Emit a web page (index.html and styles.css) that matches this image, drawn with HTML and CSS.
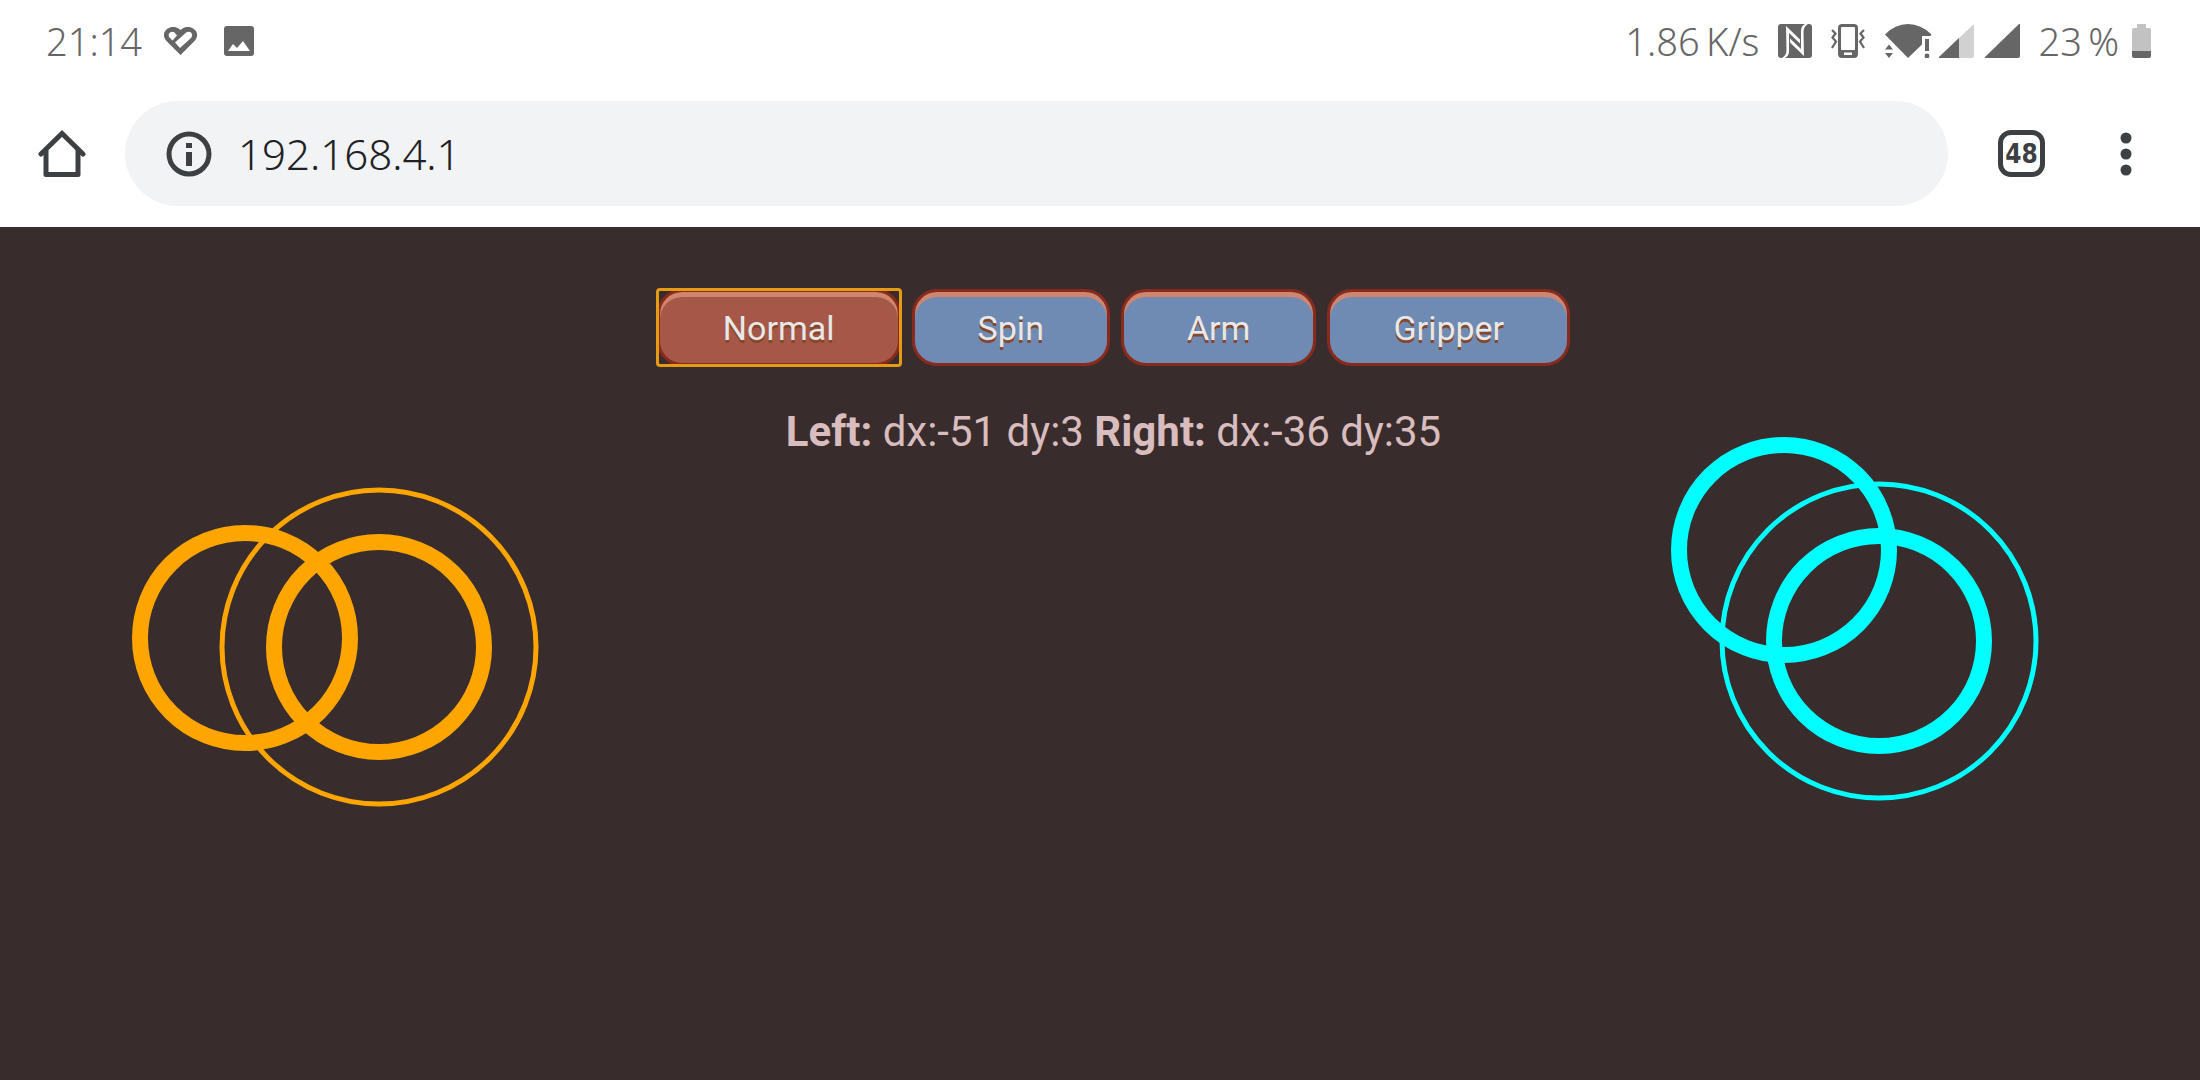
FILE: index.html
```html
<!DOCTYPE html>
<html lang="en">
<head>
<meta charset="utf-8">
<meta name="viewport" content="width=device-width, initial-scale=1">
<title>192.168.4.1</title>
<link rel="stylesheet" href="styles.css">
</head>
<body>
<header class="chrome">
  <div class="status-bar">
    <span class="clock">21:14</span>
    <svg class="icon-heart" width="34" height="28" viewBox="0 0 34 28" aria-hidden="true">
      <path fill="#666" d="M16.500 28L3 14.500C-1 10.500-1 6 2 3C5.500-.5 11-1 14.500 1.500L16.500 3L18.500 1.500C22-1 27.500-.5 31 3C34 6 34 10.500 30 14.500z"/>
      <path fill="#fff" d="M8.500 13.500L5.500 10.500C4 8.500 4.500 6.500 6 5.500C7.500 4.500 9.500 4.500 10.500 5.500L13 8.500z"/>
      <path fill="#fff" d="M11 15.500L21.500 6C23.500 4.500 25.500 4.500 27 5.500C28.500 7 28.500 9 27 11L16 21z"/>
    </svg>
    <svg class="icon-image" width="30" height="30" viewBox="0 0 30 30" aria-hidden="true">
      <path fill="#666" fill-rule="evenodd" d="M3 0h24a3 3 0 0 1 3 3v24a3 3 0 0 1-3 3H3a3 3 0 0 1-3-3V3a3 3 0 0 1 3-3z M4 25h22L19 15l-6 7-4-4z"/>
    </svg>
    <span class="net-speed">1.86&#8201;K/s</span>
    <svg class="icon-nfc" width="34" height="34" viewBox="0 0 34 34" aria-hidden="true">
      <rect width="34" height="34" rx="3" fill="#666"/>
      <path fill="#fff" d="M8 2L22 15.500V19.500L11 9V27Q11 32 7 34H4Q8.500 31.500 8.500 26z"/>
      <path fill="#fff" d="M26 32L12 18.500V14.500L23 25V7Q23 2 27 0H30Q25.500 2.500 25.500 8z"/>
    </svg>
    <svg class="icon-vibrate" width="34" height="34" viewBox="0 0 34 34" aria-hidden="true">
      <rect x="8.500" y="1.500" width="17" height="31" rx="2.500" fill="none" stroke="#666" stroke-width="3"/>
      <path fill="#666" fill-rule="evenodd" d="M8 26h18v7H8z M13 28.500h8v2.500h-8z"/>
      <path fill="none" stroke="#666" stroke-width="2.200" d="M1 6l3.500 3.500L1.500 13.500l3.500 4L1 24M33 6l-3.500 3.500 3 4-3.500 4L33 24"/>
    </svg>
    <svg class="icon-wifi" width="47" height="34" viewBox="0 0 47 34" aria-hidden="true">
      <path fill="#666" d="M0 10.500 Q10 0 23 0 Q36 0 46.500 10.500 L45.500 12 H37 V20.500 L23 34z"/>
      <path fill="#fff" d="M0 19h8l3 8v7H0z"/>
      <path fill="#666" d="M0 25.500l4-5 4 5z M0 29h8l-4 5z M40 15h4v12h-4z"/>
      <circle cx="42" cy="32" r="2.400" fill="#666"/>
    </svg>
    <svg class="icon-signal" width="35" height="34" viewBox="0 0 35 34" aria-hidden="true">
      <path fill="#d1d1d1" d="M35 0v32a2 2 0 0 1-2 2H1q-2 0-1-1z"/>
      <path fill="#666" d="M20 14v20H1q-2 0-1-1z"/>
    </svg>
    <svg class="icon-signal-full" width="35" height="34" viewBox="0 0 35 34" aria-hidden="true">
      <path fill="#666" d="M34 0h1v32a2 2 0 0 1-2 2H1q-2 0-1-1z"/>
    </svg>
    <span class="charge">23&#8201;%</span>
    <svg class="icon-battery" width="19" height="34" viewBox="0 0 19 34" aria-hidden="true">
      <path fill="#c2c2c2" d="M5 0h9v4h3a2 2 0 0 1 2 2v21H0V6a2 2 0 0 1 2-2h3z"/>
      <path fill="#666" d="M0 27h19v5a2 2 0 0 1-2 2H2a2 2 0 0 1-2-2z"/>
    </svg>
  </div>
  <div class="toolbar">
    <button class="tool" type="button" aria-label="Home">
      <svg width="48" height="48" viewBox="0 0 48 48" aria-hidden="true">
        <path fill="none" stroke="#3c4043" stroke-width="5" stroke-linecap="round" stroke-linejoin="round" d="M8 21V44.500H40V21"/>
        <path fill="none" stroke="#3c4043" stroke-width="5" stroke-linecap="round" d="M3 24L24 3.500L45 24"/>
      </svg>
    </button>
    <div class="omnibox">
      <button class="tool" type="button" aria-label="Site information">
        <svg width="46" height="46" viewBox="0 0 46 46" aria-hidden="true">
          <circle cx="23" cy="23" r="20" fill="none" stroke="#3c4043" stroke-width="5"/>
          <path fill="#3c4043" d="M20 12h6v5h-6zM20 21h6v14h-6z"/>
        </svg>
      </button>
      <input class="address" type="text" value="192.168.4.1" aria-label="Address">
    </div>
    <button class="tool tabs" type="button" aria-label="48 open tabs">48</button>
    <button class="tool" type="button" aria-label="More options">
      <svg width="12" height="44" viewBox="0 0 12 44" aria-hidden="true">
        <g fill="#3c4043"><circle cx="6" cy="6" r="5.500"/><circle cx="6" cy="22" r="5.500"/><circle cx="6" cy="38" r="5.500"/></g>
      </svg>
    </button>
  </div>
</header>
<main class="controller">
  <nav class="modes" aria-label="Drive mode">
    <button class="mode mode-active" type="button">Normal</button>
    <button class="mode" type="button">Spin</button>
    <button class="mode" type="button">Arm</button>
    <button class="mode" type="button">Gripper</button>
  </nav>
  <p class="readout"><b>Left:</b> dx:-51 dy:3 <b>Right:</b> dx:-36 dy:35</p>
  <svg class="joystick joystick-left" width="407" height="321" viewBox="0 0 407 321" role="img" aria-label="Left joystick">
    <circle class="thumb" cx="247" cy="160" r="105"/>
    <circle class="range" cx="247" cy="160" r="157"/>
    <circle class="thumb" cx="113" cy="151" r="105"/>
  </svg>
  <svg class="joystick joystick-right" width="368" height="364" viewBox="0 0 368 364" role="img" aria-label="Right joystick">
    <circle class="thumb" cx="208" cy="204" r="105"/>
    <circle class="range" cx="208" cy="204" r="157"/>
    <circle class="thumb" cx="113" cy="113" r="105"/>
  </svg>
</main>
</body>
</html>
```
FILE: styles.css
```css
* {
  box-sizing: border-box;
}

body {
  margin: 0;
  min-height: 100vh;
  display: flex;
  flex-direction: column;
  background: #382c2c;
  font-family: Roboto, sans-serif;
}

svg {
  display: block;
  flex: none;
}

.chrome {
  background: #fff;
  padding-bottom: 21px;
  font-family: "Noto Sans", sans-serif;
}

.status-bar {
  display: flex;
  align-items: center;
  height: 81px;
  padding: 0 49px 0 46px;
  color: #666;
  font-size: 38px;
  font-weight: 300;
  line-height: 44px;
  white-space: nowrap;
}

.icon-heart {
  margin-left: 22px;
}

.icon-image {
  margin-left: 26px;
}

.net-speed {
  margin-left: auto;
}

.icon-nfc {
  margin-left: 19px;
}

.icon-vibrate {
  margin-left: 19px;
}

.icon-wifi {
  margin-left: 20px;
}

.icon-signal {
  margin-left: 7px;
}

.icon-signal-full {
  margin-left: 11px;
}

.charge {
  margin-left: 18px;
}

.icon-battery {
  margin-left: 13px;
}

.toolbar {
  display: flex;
  align-items: center;
  margin-top: 20px;
  padding: 0 68px 0 38px;
}

.tool {
  flex: none;
  padding: 0;
  border: 0;
  background: none;
  color: #3c4043;
}

.omnibox {
  flex: 1;
  display: flex;
  align-items: center;
  gap: 26px;
  height: 105px;
  margin: 0 50px 0 39px;
  padding: 0 41px;
  border-radius: 53px;
  background: #f1f3f4;
}

.address {
  flex: 1;
  min-width: 0;
  padding: 0;
  border: 0;
  outline: 0;
  background: none;
  color: #202124;
  font: 300 42px/56px "Noto Sans", sans-serif;
}

.tabs {
  display: flex;
  align-items: center;
  justify-content: center;
  width: 47px;
  height: 47px;
  margin-right: 75px;
  border: 5px solid #3c4043;
  border-radius: 13px;
  font: bold 26px/36px "DejaVu Sans Condensed", "DejaVu Sans", sans-serif;
}

.controller {
  flex: 1;
  position: relative;
  padding: 62px 0 40px 27px;
}

.modes {
  display: flex;
  justify-content: center;
  gap: 11px;
}

.mode {
  position: relative;
  height: 77px;
  padding: 0 63px;
  border: 3px solid #8a2a1c;
  border-radius: 25px;
  background: #6f8bb3;
  box-shadow: inset 0 5px 0 #d0866e;
  color: #e8e8e8;
  font: 34px/40px Roboto, sans-serif;
  text-shadow: 0 3px 0 #854629;
}

.mode-active {
  background: #a65848;
}

/* Square focus ring around the selected mode */
.mode-active::after {
  content: "";
  position: absolute;
  inset: -4px;
  border: 3px solid #e59b14;
  border-radius: 4px;
}

.readout {
  margin: 40px 0 0;
  color: #d8bcbe;
  font-size: 42px;
  line-height: 52px;
  text-align: center;
}

.joystick {
  position: absolute;
  fill: none;
}

.joystick-left {
  top: 260px;
  left: 132px;
  stroke: orange;
}

.joystick-right {
  top: 210px;
  right: 161px;
  stroke: cyan;
}

.thumb {
  stroke-width: 16px;
}

.range {
  stroke-width: 5px;
}
```
